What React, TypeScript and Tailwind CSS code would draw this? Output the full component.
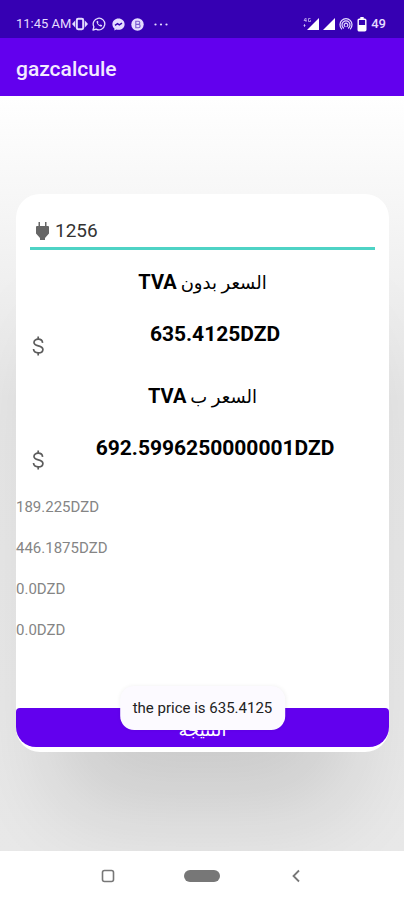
import { useState } from "react";

const TIERS = ["189.225DZD", "446.1875DZD", "0.0DZD", "0.0DZD"];

function StatusBar() {
  return (
    <div className="flex h-[38px] items-end justify-between bg-[#3600b3] px-4 pb-1 text-[#e4dcff]">
      <div className="flex h-5 items-center">
        <span className="text-[13px] leading-5">11:45 AM</span>
        <svg className="ml-px h-4 w-4" viewBox="0 0 16 16" fill="none" stroke="currentColor">
          <rect x="4.8" y="2.8" width="6.4" height="10.4" rx="1.4" strokeWidth="2" />
          <path d="M3.200 4.500v7L0 8zM12.800 4.500v7L16 8z" fill="currentColor" stroke="none" />
        </svg>
        <svg className="ml-1 h-[14px] w-[14px]" viewBox="0 0 14 14" fill="none" stroke="currentColor">
          <path d="M1 13l.9-3.2A5.8 5.8 0 1 1 4.200 12.100z" strokeWidth="1.300" strokeLinejoin="round" />
          <path d="M4.600 4.200c-.5 2.300 2.900 5.700 5.200 5.300l.4-1.300-1.500-.8-.9.7c-.9-.4-1.600-1.100-2-2l.7-.8-.7-1.500z" fill="currentColor" stroke="none" />
        </svg>
        <svg className="ml-[6px] h-[13px] w-[13px]" viewBox="0 0 13 13">
          <path d="M6.500.5C3 .5.400 3 .400 6.200c0 1.800.8 3.300 2 4.300v2l1.900-1c.7.2 1.400.3 2.200.3 3.500 0 6.100-2.500 6.100-5.600S10 .5 6.500.5z" fill="currentColor" />
          <path d="M3 7.300l2.500-1.700 1.800 1.200L10 5.200" fill="none" stroke="#3600b3" strokeWidth="1.500" />
        </svg>
        <svg className="ml-[6px] h-[13px] w-[13px]" viewBox="0 0 13 13">
          <circle cx="6.500" cy="6.500" r="6.200" fill="currentColor" />
          <path d="M4.800 3.200h2.400a1.600 1.600 0 0 1 0 3.200H4.800zM4.800 6.400h2.700a1.600 1.600 0 0 1 0 3.300H4.800z" fill="none" stroke="#7a5bd0" strokeWidth="1.100" />
        </svg>
        <svg className="ml-[10px] h-[3px] w-[14px]" viewBox="0 0 14 3" fill="currentColor">
          <circle cx="1.500" cy="1.500" r="1.100" />
          <circle cx="7" cy="1.500" r="1.100" />
          <circle cx="12.500" cy="1.500" r="1.100" />
        </svg>
      </div>
      <div className="flex h-5 items-center gap-1 pr-[2px]">
        <svg className="h-[14px] w-4" viewBox="0 0 16 14" fill="none" stroke="currentColor">
          <path d="M16 1v12H4z" fill="#fff" stroke="none" />
          <path d="M2.500 1L1 3.500h2.500M3 1v4M7.500 1.500H5.500V4.500h2V3.200" strokeWidth=".8" opacity=".8" />
          <path d="M.5 8.500h2M1.500 7v3" strokeWidth=".8" opacity=".8" />
        </svg>
        <svg className="h-[14px] w-3" viewBox="0 0 12 14">
          <path d="M12 1v12H0z" fill="#fff" />
        </svg>
        <svg className="h-[14px] w-[14px]" viewBox="0 0 14 14" fill="none" stroke="currentColor" strokeWidth="1.200" strokeLinecap="round">
          <path d="M2.600 11.800a6 6 0 1 1 8.800 0" />
          <path d="M4.500 11a4 4 0 1 1 5 0" />
          <path d="M6 9.500a1.800 1.800 0 1 1 2 0" />
        </svg>
        <svg className="h-[15px] w-[10px]" viewBox="0 0 10 15">
          <path d="M3.300 0h3.400v2H3.300z" fill="#fff" />
          <rect x="1.200" y="2.200" width="7.600" height="11.600" rx="1" fill="none" stroke="#fff" strokeWidth="1.400" />
          <path d="M1 8h8v6H1z" fill="#fff" />
        </svg>
        <span className="text-[13px] font-medium leading-5">49</span>
      </div>
    </div>
  );
}

function DollarIcon() {
  return (
    <svg className="h-6 w-4 shrink-0" viewBox="0 0 16 24" fill="none" stroke="#5c5c5c" strokeWidth="1.700">
      <path d="M12.600 8.800C12.400 6.700 10.600 5.200 8.200 5.200 5.700 5.200 4 6.500 4 8.500c0 4.600 8.900 2 8.900 6.900 0 2-1.900 3.400-4.600 3.400-2.800 0-4.600-1.400-4.800-3.800" />
      <path d="M8.200 2.500v2.700M8.200 18.800v2.700" />
    </svg>
  );
}

function PriceBlock({ label, value }: { label: string; value: string }) {
  return (
    <div className="h-[114px]">
      <h2 dir="rtl" className="text-center leading-8 text-black">
        <span className="text-[18px] font-medium">{label}</span> <span className="text-[20px] font-bold">TVA</span>
      </h2>
      <div className="mt-[18px] flex h-10 items-end">
        <DollarIcon />
        <output className="flex-1 self-start pl-[9px] text-center text-[21px] font-bold leading-8 text-black">
          {value}
        </output>
      </div>
    </div>
  );
}

export default function App() {
  const [usage, setUsage] = useState("1256");

  return (
    <div className="flex min-h-screen flex-col bg-white font-['Roboto','DejaVu_Sans',sans-serif]">
      <StatusBar />
      <header className="flex h-[58px] items-center bg-[#6200ee] px-4">
        <h1 className="pt-1 text-[21px] font-medium leading-7 text-[#f3eaff]">gazcalcule</h1>
      </header>

      <main className="flex flex-1 flex-col overflow-hidden bg-linear-to-b from-white via-[#e6e6e6] via-40% to-[#e9e9e9] pt-[98px] pr-[15px] pb-[99px] pl-4">
        <section className="relative flex flex-1 flex-col rounded-[24px] bg-white shadow-[0_100px_100px_-40px_rgba(0,0,0,0.13)]">
          <div className="px-[14px] pt-5">
            <label className="flex h-[36px] items-center border-b-[3px] border-[#4ed3c5] pl-[5px]">
              <svg className="h-5 w-[15px] shrink-0" viewBox="0 0 15 20" fill="#666">
                <path d="M3.500 1H5v5H3.500zM10 1h1.500v5H10zM2 5h11q1 0 1 1v6.500L10 17v2H5v-2L1 12.500V6q0-1 1-1z" />
              </svg>
              <input
                aria-label="Consumption"
                className="w-full min-w-0 bg-transparent pl-[5px] text-[19px] leading-6 text-[#333] outline-none"
                value={usage}
                onChange={(e) => setUsage(e.target.value)}
              />
            </label>
            <div className="pt-4">
              <PriceBlock label="السعر بدون" value="635.4125DZD" />
              <PriceBlock label="السعر ب" value="692.5996250000001DZD" />
            </div>
          </div>

          <ul className="flex flex-col gap-[21px] pt-[3px] text-[15px] leading-5 text-[#858585]">
            {TIERS.map((tier, i) => (
              <li key={i}>{tier}</li>
            ))}
          </ul>

          <button
            type="button"
            className="mt-auto mb-[5px] h-[39px] rounded-t-[4px] rounded-b-[20px] bg-[#6200ee] pt-1 text-[18px] font-medium text-white"
          >
            النتيجة
          </button>

          <div
            role="status"
            className="absolute bottom-[22px] left-1/2 -translate-x-1/2 rounded-[14px] bg-[#fcfaff] px-[13px] py-3 text-[15px] leading-5 whitespace-nowrap text-[#222] shadow-[0_0_4px_rgba(0,0,0,0.06)]"
          >
            the price is 635.4125
          </div>
        </section>
      </main>

      <nav className="flex h-[49px] items-center justify-center gap-[66px] bg-white text-[#777]">
        <button type="button" aria-label="Recent apps">
          <svg className="h-7 w-7" viewBox="0 0 28 28" fill="none" stroke="currentColor" strokeWidth="1.600">
            <rect x="8.500" y="8.500" width="11" height="11" rx="2" />
          </svg>
        </button>
        <button type="button" aria-label="Home" className="-mx-1">
          <svg className="h-3 w-9" viewBox="0 0 36 12" fill="currentColor">
            <rect width="36" height="12" rx="6" />
          </svg>
        </button>
        <button type="button" aria-label="Back">
          <svg className="h-7 w-7" viewBox="0 0 28 28" fill="none" stroke="currentColor" strokeWidth="1.800">
            <path d="M17 8.500L11.500 14l5.500 5.500" />
          </svg>
        </button>
      </nav>
    </div>
  );
}
